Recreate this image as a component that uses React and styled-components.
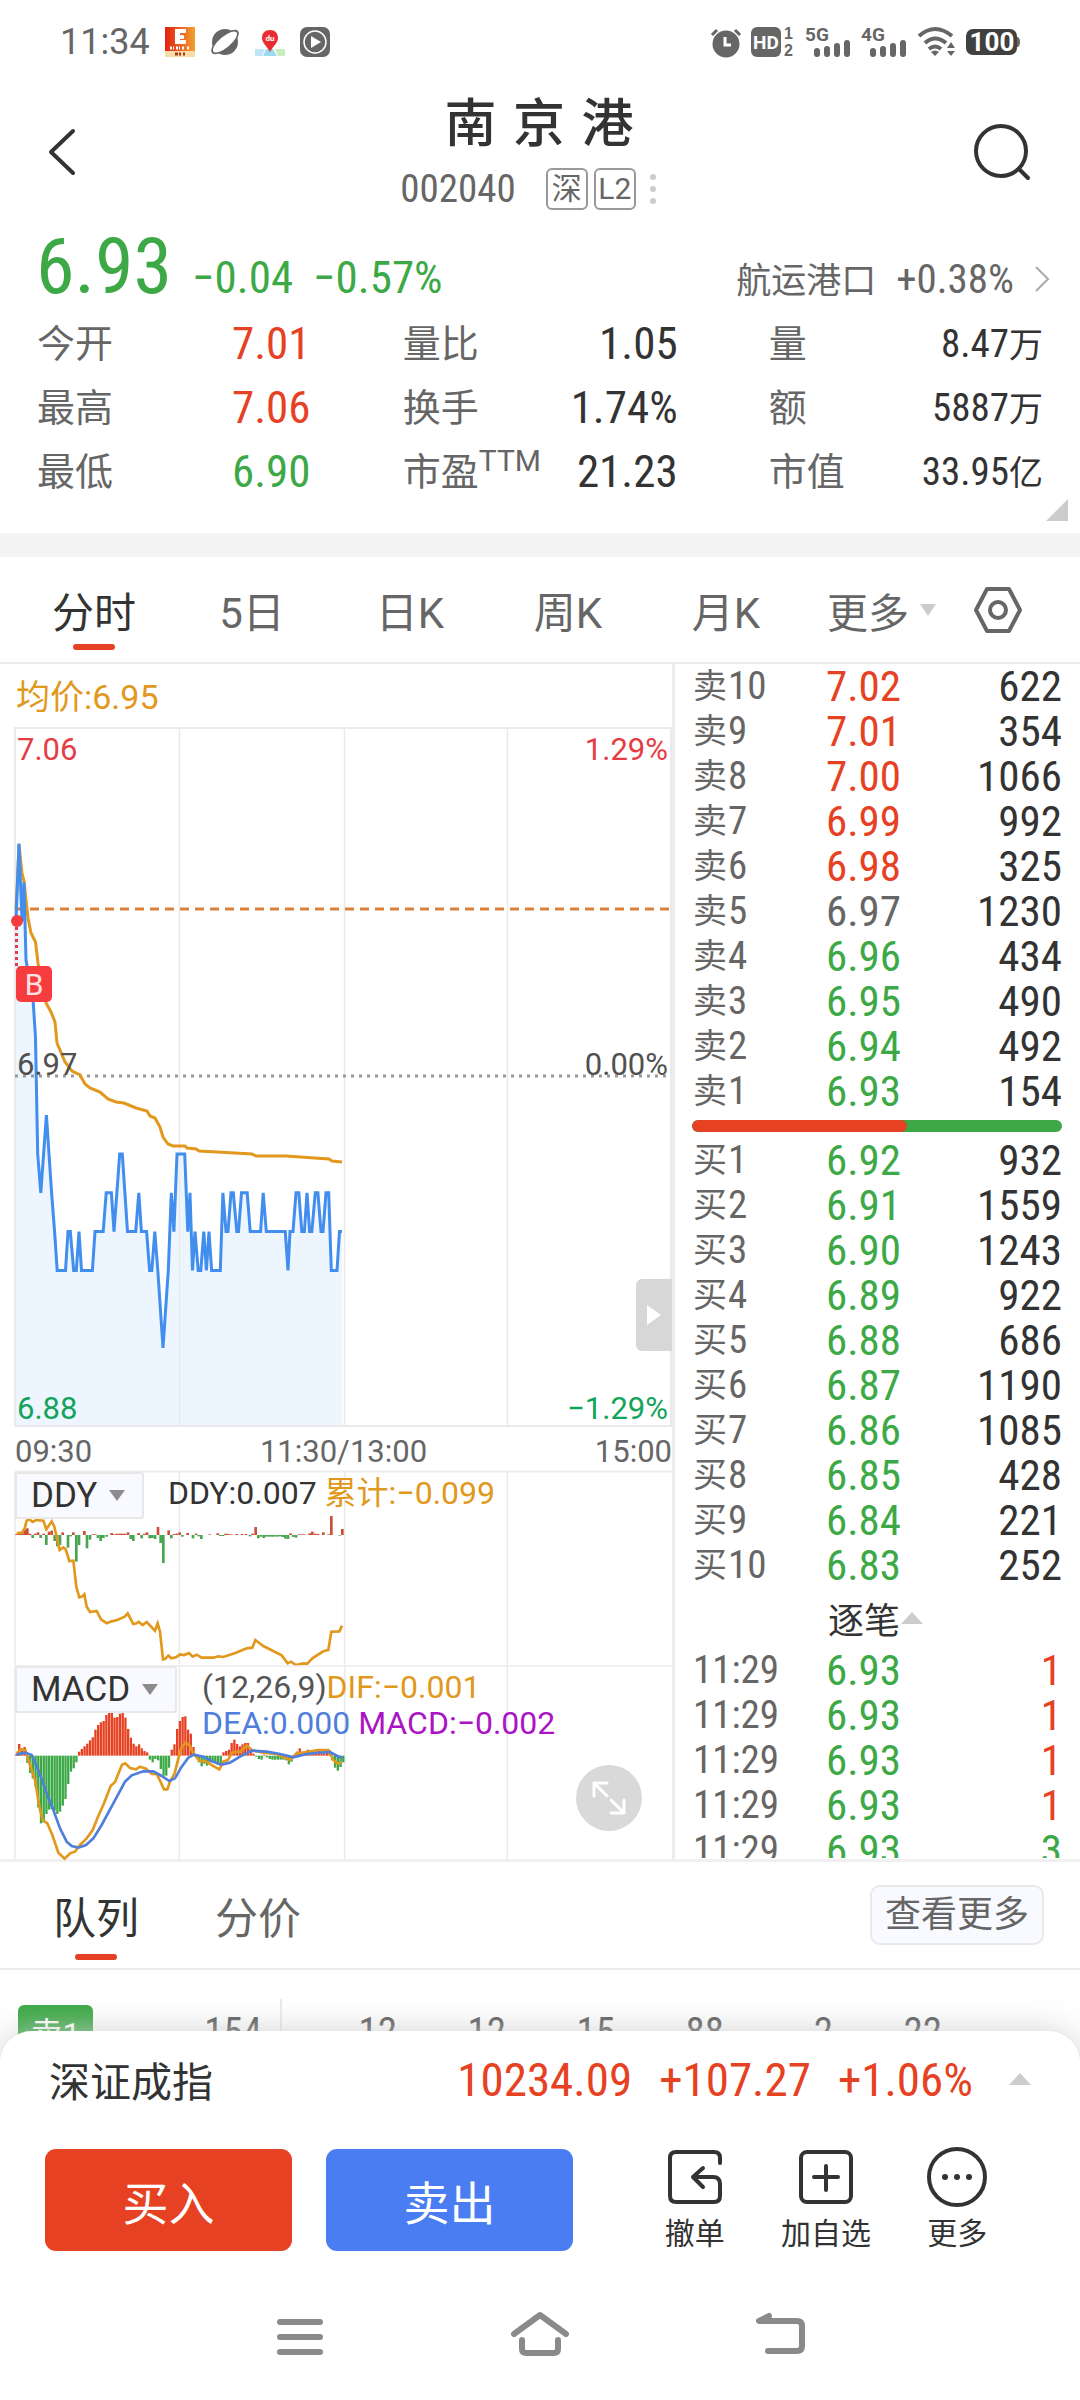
import styled, { createGlobalStyle } from "styled-components";

const RED = "#e64123";
const GREEN = "#3ca946";
const GOLD = "#e1981c";
const DARK = "#333333";
const GRAY = "#666666";
const LINE = "#ebebeb";

const GlobalStyle = createGlobalStyle`
  * {
    box-sizing: border-box;
  }

  body {
    margin: 0;
    background: #ffffff;
    color: ${DARK};
    font-family: Roboto, "Noto Sans CJK SC", sans-serif;
  }

  button,
  select {
    margin: 0;
    padding: 0;
    border: 0;
    background: none;
    color: inherit;
    font: inherit;
  }

  svg {
    display: block;
    flex: none;
    overflow: visible;
  }
`;

const Page = styled.main`
  display: flex;
  flex-direction: column;
  min-height: 100vh;
  overflow: hidden;
`;

const Num = styled.span`
  display: block;
  color: ${(props) => props.$color || "inherit"};
  font-family: "Roboto Condensed", Roboto, "Noto Sans CJK SC", sans-serif;
  font-size: ${(props) => props.$size || 43}px;
  white-space: nowrap;
`;

/* status bar */

const StatusBar = styled.div`
  display: flex;
  align-items: center;
  justify-content: space-between;
  height: 84px;
  padding: 0 60px;
  color: ${GRAY};
`;

const StatusGroup = styled.div`
  display: flex;
  align-items: center;
  gap: ${(props) => props.$gap}px;
`;

const Clock = styled.span`
  font-size: 36px;
`;

/* header */

const Header = styled.header`
  display: grid;
  grid-template-columns: 58px 1fr 58px;
  align-items: center;
  padding: 10px 49px 23px 47px;
`;

const IconButton = styled.button`
  display: flex;
  cursor: pointer;
`;

const Heading = styled.div`
  display: flex;
  flex-direction: column;
  align-items: center;
  gap: 14px;
`;

const StockName = styled.h1`
  margin: 0;
  font-family: "DejaVu Sans", "Noto Sans CJK SC", sans-serif;
  font-size: 52px;
  font-weight: 500;
  line-height: 60px;
`;

const SubLine = styled.div`
  display: flex;
  align-items: center;
  gap: 6px;
  height: 42px;
  padding-right: 16px;
  color: ${GRAY};
`;

const Code = styled(Num)`
  margin-right: 24px;
`;

const Tag = styled.span`
  width: 42px;
  height: 42px;
  border: 2px solid #999999;
  border-radius: 6px;
  font-size: 30px;
  line-height: 38px;
  text-align: center;
`;

const PriceRow = styled.div`
  display: flex;
  align-items: baseline;
  justify-content: space-between;
  height: 71px;
  padding: 0 30px 0 36px;
  line-height: 68px;
`;

const PriceGroup = styled.div`
  display: flex;
  align-items: baseline;
  gap: 20px;
`;

const Sector = styled.a`
  display: flex;
  align-items: baseline;
  gap: 20px;
  color: ${GRAY};
  font-size: 35px;
  text-decoration: none;
`;

const Quotes = styled.section`
  display: grid;
  grid-template-columns: 4fr 4fr 3fr;
  position: relative;
  padding: 8px 37px 29px;
`;

const QuoteColumn = styled.dl`
  margin: 0;
  padding-right: ${(props) => props.$pad || 0}px;
`;

const QuoteRow = styled.div`
  display: flex;
  align-items: center;
  justify-content: ${(props) => (props.$start ? "flex-start" : "space-between")};
  height: 64px;
`;

const QuoteLabel = styled.dt`
  min-width: ${(props) => (props.$start ? 195 : 0)}px;
  color: ${GRAY};
  font-size: 38px;
  line-height: 64px;
  white-space: nowrap;

  sup {
    font-size: 30px;
    line-height: 1;
  }
`;

const QuoteValue = styled.dd`
  margin: 0;
  line-height: 64px;
`;

const Unit = styled.span`
  font-size: 34px;
`;

const Corner = styled.span`
  position: absolute;
  right: 12px;
  bottom: 12px;
  border-bottom: 22px solid #cccccc;
  border-left: 22px solid transparent;
`;

const Band = styled.div`
  height: 24px;
  background: #f4f4f4;
`;

/* tabs */

const Tabs = styled.nav`
  display: flex;
  align-items: center;
  height: 107px;
  padding-left: 15px;
  border-bottom: 2px solid ${LINE};
`;

const Tab = styled.button`
  position: relative;
  width: ${(props) => props.$width || 158}px;
  height: 105px;
  color: ${(props) => (props.$active ? DARK : GRAY)};
  font-size: ${(props) => props.$size || 42}px;
  cursor: pointer;

  &::after {
    content: "";
    display: ${(props) => (props.$active ? "block" : "none")};
    position: absolute;
    bottom: ${(props) => props.$drop || 12}px;
    left: 50%;
    width: 42px;
    height: 6px;
    margin-left: -21px;
    border-radius: 3px;
    background: ${RED};
  }
`;

const MoreTab = styled.button`
  display: flex;
  align-items: center;
  gap: 11px;
  margin: 0 38px 0 22px;
  color: ${GRAY};
  font-size: 41px;
`;

const Triangle = styled.span`
  border-right: ${(props) => props.$w}px solid transparent;
  border-left: ${(props) => props.$w}px solid transparent;
  border-${(props) => (props.$up ? "bottom" : "top")}: ${(props) => props.$h}px solid
    ${(props) => props.$color || "#cccccc"};
`;

/* charts */

const Board = styled.section`
  display: grid;
  grid-template-columns: minmax(0, 1fr) 408px;
  border-bottom: 3px solid #f0f0f0;
`;

const Charts = styled.div`
  padding-left: 14px;
`;

const Average = styled.div`
  height: 63px;
  padding-left: 2px;
  color: ${GOLD};
  font-size: 34px;
  line-height: 66px;
`;

const Plot = styled.div`
  position: relative;
  height: ${(props) => props.$height}px;

  > svg {
    width: 100%;
    height: 100%;
  }
`;

const Scale = styled.div`
  display: flex;
  justify-content: space-between;
  position: absolute;
  top: ${(props) => props.$top}px;
  right: 4px;
  left: 3px;
  color: ${(props) => props.$color};
  font-size: 31px;
  line-height: 36px;
`;

const BuyMark = styled.span`
  position: absolute;
  top: 239px;
  left: 2px;
  width: 36px;
  height: 36px;
  border-radius: 5px;
  background: #f73c3f;
  color: #ffe1e1;
  font-size: 30px;
  line-height: 38px;
  text-align: center;
`;

const Handle = styled.button`
  display: flex;
  align-items: center;
  justify-content: center;
  position: absolute;
  right: 0;
  bottom: 76px;
  width: 36px;
  height: 72px;
  border-radius: 6px 0 0 6px;
  background: #d7d7d7;
`;

const Times = styled.div`
  display: flex;
  justify-content: space-between;
  height: 44px;
  padding-left: 1px;
  color: ${GRAY};
  font-size: 31px;
  line-height: 50px;
`;

const Picker = styled.label`
  display: flex;
  align-items: center;
  gap: 11px;
  position: absolute;
  top: 1px;
  left: 1px;
  height: 47px;
  padding: 0 17px 0 14px;
  border: 2px solid #e8e8e8;
  border-radius: 3px;
  background: #f8faff;
  font-size: 35px;

  select {
    appearance: none;
    outline: none;
  }
`;

const Legend = styled.div`
  position: absolute;
  top: 4px;
  left: ${(props) => props.$left}px;
  color: ${DARK};
  font-size: 32px;
  line-height: 36px;
  white-space: nowrap;
`;

const Tint = styled.span`
  color: ${(props) => props.$color};
`;

const Expand = styled.button`
  display: flex;
  align-items: center;
  justify-content: center;
  position: absolute;
  right: 30px;
  bottom: 28px;
  width: 66px;
  height: 66px;
  border-radius: 50%;
  background: #d9d9d9;
`;

/* order book */

const Book = styled.div`
  padding: 0 18px 0 17px;
  border-left: 3px solid ${LINE};
`;

const BookTable = styled.table`
  width: 100%;
  border-collapse: collapse;
  table-layout: fixed;

  td,
  th {
    height: 45px;
    padding: 0;
    font-weight: 400;
    line-height: 45px;
    text-align: left;
  }

  th {
    padding-left: 1px;
    color: ${GRAY};
  }

  td:last-child {
    text-align: right;
  }
`;

const BookLabel = styled.span`
  display: flex;
  align-items: center;
  gap: 1px;
  height: 45px;
  font-size: 34px;
`;

const Ratio = styled.div`
  height: 12px;
  margin: 6px 0;
  border-radius: 6px;
  background: ${GREEN};
  overflow: hidden;
`;

const RatioFill = styled.div`
  height: 12px;
  border-radius: 6px;
  background: ${RED};
`;

const TradesToggle = styled.button`
  display: flex;
  align-items: center;
  gap: 1px;
  height: 60px;
  margin-left: 136px;
  font-size: 36px;
`;

const Trades = styled.div`
  height: 210px;
  overflow: hidden;
`;

/* queue */

const QueueTabs = styled(Tabs)`
  height: 108px;
  padding: 0 36px 0 15px;
`;

const SeeMore = styled.button`
  height: 60px;
  margin-left: auto;
  padding: 0 13px;
  border: 2px solid #e9e9e9;
  border-radius: 10px;
  background: #f8faff;
  color: ${GRAY};
  font-size: 36px;
  line-height: 54px;
`;

const Queue = styled.div`
  display: grid;
  grid-template-columns: 75px 169px 20px 115px repeat(5, 109px);
  height: 91px;
  padding: 29px 0 0 18px;
  color: #555555;
  line-height: 66px;
  text-align: right;
`;

const QueueBadge = styled.span`
  height: 60px;
  margin-top: 6px;
  border-radius: 6px;
  background: ${GREEN};
  color: #ffffff;
  font-size: 32px;
  line-height: 58px;
  text-align: center;
`;

const QueueRule = styled.span`
  border-right: 2px solid ${LINE};
`;

/* bottom sheet */

const Sheet = styled.section`
  position: relative;
  flex: 1;
  margin-top: -30px;
  padding: 0 45px;
  border-radius: 32px 32px 0 0;
  background: #ffffff;
  box-shadow: 0 0 32px rgba(205, 205, 205, 0.9);
`;

const IndexRow = styled.div`
  display: flex;
  align-items: center;
  justify-content: space-between;
  height: 96px;
  padding: 0 4px;
  font-size: 41px;
`;

const IndexFigures = styled.div`
  display: flex;
  gap: 27px;
  margin: 0 36px 0 auto;
`;

const Actions = styled.div`
  display: flex;
  align-items: center;
  gap: 34px;
  margin-top: 20px;
`;

const TradeButton = styled.button`
  width: 247px;
  height: 102px;
  border-radius: 11px;
  background: ${(props) => props.$color};
  color: #ffffff;
  font-size: 46px;
  cursor: pointer;
`;

const Tools = styled.div`
  display: flex;
  flex: 1;
  margin: 0 12px 0 22px;
`;

const Tool = styled.button`
  display: flex;
  flex: 1;
  flex-direction: column;
  align-items: center;
  gap: 9px;
  font-size: 30px;
  line-height: 36px;
`;

const SystemNav = styled.nav`
  display: flex;
  justify-content: center;
  gap: 180px;
  padding: 54px 0 36px;
`;

const asks = [
  ["10", "7.02", "622", RED],
  ["9", "7.01", "354", RED],
  ["8", "7.00", "1066", RED],
  ["7", "6.99", "992", RED],
  ["6", "6.98", "325", RED],
  ["5", "6.97", "1230", GRAY],
  ["4", "6.96", "434", GREEN],
  ["3", "6.95", "490", GREEN],
  ["2", "6.94", "492", GREEN],
  ["1", "6.93", "154", GREEN],
];

const bids = [
  ["1", "6.92", "932", GREEN],
  ["2", "6.91", "1559", GREEN],
  ["3", "6.90", "1243", GREEN],
  ["4", "6.89", "922", GREEN],
  ["5", "6.88", "686", GREEN],
  ["6", "6.87", "1190", GREEN],
  ["7", "6.86", "1085", GREEN],
  ["8", "6.85", "428", GREEN],
  ["9", "6.84", "221", GREEN],
  ["10", "6.83", "252", GREEN],
];

const trades = [
  ["11:29", "6.93", "1", RED],
  ["11:29", "6.93", "1", RED],
  ["11:29", "6.93", "1", RED],
  ["11:29", "6.93", "1", RED],
  ["11:29", "6.93", "3", GREEN],
];

const queue = ["12", "12", "15", "88", "2", "22"];

// [x, cents above 6.90]
const price = [
  [16, 11], [19, 13], [22, 11], [24, 12], [26, 10], [33, 9], [35.5, 8], [37.7, 5],
  [40.8, 4], [46.4, 6], [49, 5], [51.6, 4], [54.6, 3], [57.2, 2], [65.5, 2], [68, 3],
  [70.3, 3], [73.7, 2], [76.3, 2], [79, 3], [81.5, 2], [92.4, 2], [95, 3], [103.2, 3],
  [106.2, 4], [111.4, 4], [114, 3], [119.7, 5], [122.3, 5], [127.5, 3], [135.7, 3],
  [138.8, 4], [141.4, 3], [146.6, 3], [149.6, 2], [151.8, 2], [154.8, 3], [157.8, 2],
  [163, 0], [168.3, 2], [171.3, 4], [173.9, 3], [177, 5], [184.7, 5], [187.8, 3],
  [190, 4], [192.5, 2], [195, 3], [198.2, 2], [200.8, 2], [203.8, 3], [206.4, 2],
  [209, 3], [211.6, 2], [220.3, 2], [222.9, 4], [226, 3], [228, 3], [231, 4],
  [233.3, 4], [236.8, 3], [238.5, 3], [241.5, 4], [247.2, 4], [250.2, 3], [260.6, 3],
  [263.2, 4], [266.3, 3], [285.3, 3], [288, 2], [290, 3], [293, 3], [296, 4],
  [298.8, 4], [301.8, 3], [304.4, 3], [307, 4], [309.6, 3], [311.8, 3], [315.3, 4],
  [317.9, 4], [321, 3], [323, 3], [326, 4], [328.7, 4], [331.3, 2], [337, 2],
  [339.5, 3], [342, 3],
];

const pricePoints = price.map(([x, c]) => `${x},${1348 - c * 38.8}`).join(" ");

const averagePoints =
  "16,910 19,845 22,873 24,881 26,900 28,918 31,933 35.5,942 38,963 42,990 46,1003 51,1012 55,1022 57,1043 65,1062 72,1071 80,1075 85,1084 90,1088 100,1092 108,1099 116,1102 124,1103 136,1108 147,1111 150,1116 155,1118 160,1127 163,1137 168,1144 173,1146 185,1146 187,1148 196,1149 199,1151 217,1152 252,1154 256,1156 286,1156 329,1159 332,1161 342,1162";

// [x, height], up is inflow
const ddyBars = [
  [46, 3], [54, 4], [62, 8], [70, 16], [78, 20], [86, 4], [94, -9], [102, 4], [110, 8],
  [118, -9], [127, 4], [135, -30], [143, 10], [151, 13], [160, -18], [168, -34],
  [176, -30], [184, 8], [200, -38], [208, -4], [216, 8], [225, -80], [233, -30],
  [249, 12], [257, -40], [266, -14], [274, 2], [282, 2], [290, -9], [298, -18],
  [306, -9], [316, -5], [331, 6], [339, 2], [347, 4], [355, 4], [363, 4], [371, 4],
  [380, 8], [388, -12], [396, -18], [412, 6], [421, -10], [429, 4], [437, 8],
  [445, -10], [453, -9], [461, -12], [470, 24], [478, -24], [486, -84], [502, 14],
  [510, -10], [518, 3], [526, 4], [535, 8], [543, -5], [559, 6], [575, -10],
  [584, 4], [592, -4], [600, -12], [625, 2], [649, 5], [657, -3], [665, -3],
  [673, 4], [681, 3], [690, 2], [706, 3], [722, 3], [734, 3], [746, -4], [754, 4],
  [763, 24], [771, -10], [779, -5], [787, -9], [795, -5], [803, -5], [811, -5],
  [819, -5], [828, -5], [836, -4], [844, -6], [852, -11], [860, -12], [868, 5],
  [876, -6], [884, -8], [893, 2], [901, 2], [909, 2], [925, 5], [933, 10], [942, 4],
  [950, 3], [966, 8], [982, 2], [990, 57], [1015, -2], [1023, 18],
];

const ddyLine =
  "50,220 66,218 74,205 80,182 88,178 98,186 108,180 130,182 139,208 155,184 163,200 172,240 179,270 190,262 197,268 208,303 220,302 229,380 238,412 246,410 253,403 260,440 270,456 290,453 303,478 320,490 335,484 352,480 374,470 383,460 391,475 400,492 410,490 416,486 428,495 440,486 465,512 473,490 480,515 489,598 495,597 505,587 514,595 528,592 540,583 552,585 567,579 578,590 590,584 605,593 640,593 655,589 670,591 706,579 740,565 757,563 766,540 790,558 845,586 863,610 873,605 888,615 910,610 922,611 938,594 970,574 985,570 994,515 1018,514 1026,497";

const macdBars = [
  5, 35, 22, 26, -22, -52, -68, -92, -155, -203, -200, -175, -162, -160, -165, -175,
  -168, -150, -130, -85, -48, -38, -20, 12, 20, 28, 36, 46, 55, 78, 92, 100, 104, 122,
  134, 134, 114, 116, 126, 134, 114, 80, 54, 36, 28, 34, 22, 14, 10, -12, -20, -10,
  -14, -40, -60, -60, -36, 18, 34, 80, 104, 116, 118, 78, 66, 26, 0, -20, -32, -24,
  -30, -20, -20, -20, -28, -30, 10, 14, 18, 38, 48, 35, 28, 34, 38, 38, 12, 6, -3,
  -10, -12, 3, -5, -10, -12, -12, -12, -12, -12, -14, -26, -18, -5, 12, 22, 12, 10,
  18, 10, 6, 12, 16, 8, 6, 14, 16, -14, -36, -45, -34, -20,
];

const difLine =
  "50,880 62,868 76,870 90,915 105,960 118,1040 128,1080 142,1090 157,1125 175,1178 194,1196 210,1180 225,1175 240,1155 260,1135 278,1110 292,1075 312,1030 332,978 345,966 366,914 376,910 390,924 408,928 420,920 438,926 456,942 470,942 480,962 492,988 502,988 510,965 524,940 535,895 545,862 556,848 568,855 580,880 598,902 620,905 640,918 658,928 670,905 684,900 694,880 706,875 720,876 740,856 755,870 790,878 830,882 870,900 890,880 910,878 955,870 985,870 1000,900 1012,910 1024,908";

const deaLine =
  "50,884 75,878 95,885 115,930 140,1000 160,1050 180,1105 200,1145 215,1158 235,1163 258,1155 280,1135 305,1095 340,1030 375,965 395,946 430,934 460,934 485,948 508,963 525,955 545,920 565,893 582,884 610,890 640,905 665,914 690,908 720,890 755,872 800,875 840,882 880,892 920,882 960,878 990,876 1012,888 1028,893";

const StatusIcons = () => (
  <StatusGroup $gap={15}>
    <Clock>11:34</Clock>
    <svg width="30" height="30" viewBox="0 0 30 30">
      <defs>
        <linearGradient id="sunset">
          <stop offset="0" stopColor="#e21f10" />
          <stop offset="1" stopColor="#f3a032" />
        </linearGradient>
      </defs>
      <rect width="30" height="30" fill="url(#sunset)" />
      <rect y="24" width="30" height="6" fill="#f8dca8" />
      <rect x="10" y="2" width="5" height="15" fill="#fff" />
      <rect x="10" y="2" width="11" height="4" rx="1" fill="#fff" />
      <rect x="10" y="8" width="9" height="4" rx="1" fill="#fff" />
      <rect x="10" y="13" width="11" height="4" rx="1" fill="#fff" />
      <path d="M5 21h4M11 21h4M17 21h3M22 21h3" stroke="#fff" strokeWidth="3" strokeDasharray="2 1" />
      <path d="M10 27h3M14 27h2M18 27h2" stroke="#a33b1f" strokeWidth="3" />
    </svg>
    <svg width="30" height="30" viewBox="0 0 30 30">
      <circle cx="15" cy="15" r="13" fill={GRAY} />
      <ellipse cx="15" cy="15" rx="17" ry="7" fill={GRAY} transform="rotate(-40 15 15)" />
      <ellipse cx="15" cy="15" rx="15" ry="5.5" fill="#fff" transform="rotate(-40 15 15)" />
    </svg>
    <svg width="30" height="30" viewBox="0 0 30 30">
      <path d="M0 22h10l-3 7H0z" fill="#bfe6f4" />
      <path d="M20 22h10v7h-7z" fill="#c8eebf" />
      <path d="M11 22l-3 7h14l-4-7z" fill="#9bdcf3" />
      <path d="M15 3c5 0 8 3 8 8 0 5-5 8-8 14-3-6-8-9-8-14 0-5 3-8 8-8z" fill="#e92c2f" />
      <text x="15" y="14" fill="#fff" fontSize="8" fontWeight="700" textAnchor="middle">
        du
      </text>
    </svg>
    <svg width="30" height="30" viewBox="0 0 30 30">
      <rect width="30" height="30" rx="7" fill={GRAY} />
      <circle cx="15" cy="15" r="11" fill="none" stroke="#fff" strokeWidth="1.5" />
      <path d="M11 9l10 6-10 6z" fill="#fff" />
    </svg>
  </StatusGroup>
);

const Signal = ({ name }) => (
  <svg width="46" height="30" viewBox="0 0 46 30">
    <text x="0" y="14" fill={GRAY} fontSize="19" fontWeight="700" fontFamily="Roboto">
      {name}
    </text>
    <path
      d="M12 24v3M22 22v5M32 19v8M42 16v11"
      stroke={GRAY}
      strokeWidth="6"
      strokeLinecap="round"
    />
  </svg>
);

const StatusSignals = () => (
  <StatusGroup $gap={10}>
    <svg width="30" height="30" viewBox="0 0 30 30">
      <circle cx="15" cy="17" r="13.5" fill={GRAY} />
      <path d="M1 8l5-5M29 8l-5-5" stroke={GRAY} strokeWidth="3" />
      <path d="M14 10v8h6" fill="none" stroke="#fff" strokeWidth="3" />
    </svg>
    <svg width="44" height="30" viewBox="0 0 44 30">
      <rect width="30" height="30" rx="6" fill={GRAY} />
      <text x="15" y="22" fill="#fff" fontSize="19" fontWeight="700" fontFamily="Roboto" textAnchor="middle">
        HD
      </text>
      <g fill={GRAY} fontSize="16" fontWeight="700" fontFamily="Liberation Sans">
        <text x="33" y="12">1</text>
        <text x="33" y="29">2</text>
      </g>
    </svg>
    <Signal name="5G" />
    <Signal name="4G" />
    <svg width="38" height="30" viewBox="0 0 38 30">
      <g fill="none" stroke={GRAY} strokeWidth="4">
        <path d="M2 9q16-14 33 0" />
        <path d="M8 16q10-9 21 0" />
        <path d="M12 22q6-5 12 0" />
      </g>
      <path d="M14 25q4-3 8 0l-4 4z" fill={GRAY} />
      <path d="M34 15l4 6h-8zM34 29l4-5h-8z" fill={GRAY} />
    </svg>
    <svg width="55" height="28" viewBox="0 0 55 28">
      <rect x="1" y="1" width="51" height="26" rx="7" fill="#404040" />
      <path d="M52 9q3 0 3 5t-3 5z" fill={GRAY} />
      <text x="27" y="23" fill="#fff" fontSize="26" fontWeight="700" fontFamily="Roboto" textAnchor="middle">
        100
      </text>
    </svg>
  </StatusGroup>
);

const MainChart = () => (
  <Plot $height={700}>
    <svg viewBox="14 727 658 700" preserveAspectRatio="none">
      <polygon points={`${pricePoints} 342,1426 16,1426`} fill="#edf5fe" />
      <g stroke="#eaeaec" strokeWidth="1.500" fill="none">
        <path d="M179.500 727V1426M344.500 727V1426M507.500 727V1426" />
        <path d="M15 1426V728H671V1426z" strokeWidth="2" />
      </g>
      <path d="M15 909H671" stroke="#d9813c" strokeWidth="3" strokeDasharray="9 6" />
      <path d="M15 1076H671" stroke="#999999" strokeWidth="3" strokeDasharray="3 5" />
      <polyline points={averagePoints} fill="none" stroke={GOLD} strokeWidth="3" />
      <polyline points={pricePoints} fill="none" stroke="#418eee" strokeWidth="3" />
      <path d="M16.500 927V966" stroke="#e23b4b" strokeWidth="3" strokeDasharray="3 3" />
      <circle cx="17" cy="921" r="6" fill="#f73c3f" />
    </svg>
    <Scale $top={5} $color="#e63c46">
      <span>7.06</span>
      <span>1.29%</span>
    </Scale>
    <Scale $top={320} $color="#505050">
      <span>6.97</span>
      <span>0.00%</span>
    </Scale>
    <Scale $top={664} $color="#12a35c">
      <span>6.88</span>
      <span>−1.29%</span>
    </Scale>
    <BuyMark>B</BuyMark>
    <Handle aria-label="收起盘口">
      <svg width="16" height="22" viewBox="0 0 16 22">
        <path d="M1 1l14 10L1 21z" fill="#fff" />
      </svg>
    </Handle>
  </Plot>
);

const DdyChart = () => (
  <Plot $height={194}>
    <svg viewBox="42 33 1974 582" preserveAspectRatio="none">
      <g stroke="#ebebed" strokeWidth="5">
        <path d="M45 35H2016M45 35V615M538 35V615M1034 35V615M1522 35V615" fill="none" />
      </g>
      {ddyBars.map(([x, h]) => (
        <rect
          key={x}
          x={x}
          y={h > 0 ? 225 - h : 225}
          width="8"
          height={Math.abs(h)}
          fill={h > 0 ? "#cb4f38" : "#48a651"}
        />
      ))}
      <polyline points={ddyLine} fill="none" stroke={GOLD} strokeWidth="8" />
    </svg>
    <Picker>
      <select aria-label="指标一">
        <option>DDY</option>
      </select>
      <Triangle $w={8} $h={11} $color="#8c8c8c" />
    </Picker>
    <Legend $left={154}>
      DDY:0.007 <Tint $color={GOLD}>累计:−0.099</Tint>
    </Legend>
  </Plot>
);

const MacdChart = () => (
  <Plot $height={194}>
    <svg viewBox="42 615 1974 582" preserveAspectRatio="none">
      <g stroke="#ebebed" strokeWidth="5">
        <path d="M45 618H2016M45 618V1197M538 618V1197M1034 618V1197M1522 618V1197" fill="none" />
      </g>
      {macdBars.map((h, i) => (
        <rect
          key={i}
          x={46 + i * 8.17}
          y={h > 0 ? 887 - h : 887}
          width="7"
          height={Math.abs(h)}
          fill={h > 0 ? RED : GREEN}
        />
      ))}
      <polyline points={difLine} fill="none" stroke={GOLD} strokeWidth="8" />
      <polyline points={deaLine} fill="none" stroke="#4f7edb" strokeWidth="8" />
    </svg>
    <Picker>
      <select aria-label="指标二">
        <option>MACD</option>
      </select>
      <Triangle $w={8} $h={11} $color="#8c8c8c" />
    </Picker>
    <Legend $left={188}>
      <Tint $color="#555555">(12,26,9)</Tint>
      <Tint $color={GOLD}>DIF:−0.001</Tint>
      <br />
      <Tint $color="#4f7edb">DEA:0.000</Tint> <Tint $color="#aa14c3">MACD:−0.002</Tint>
    </Legend>
    <Expand aria-label="全屏">
      <svg width="34" height="34" viewBox="0 0 34 34">
        <path
          d="M15 2H2v13M2 2l13 13M32 19v13H19M32 32L19 19"
          fill="none"
          stroke="#fff"
          strokeWidth="3"
          strokeLinecap="round"
          strokeLinejoin="round"
        />
      </svg>
    </Expand>
  </Plot>
);

const Levels = ({ side, rows }) => (
  <BookTable>
    <colgroup>
      <col width="134" />
      <col />
      <col />
    </colgroup>
    <tbody>
      {rows.map(([level, value, amount, color]) => (
        <tr key={level}>
          <th scope="row">
            <BookLabel>
              {side}
              <Num $size={39}>{level}</Num>
            </BookLabel>
          </th>
          <td>
            <Num $color={color}>{value}</Num>
          </td>
          <td>
            <Num>{amount}</Num>
          </td>
        </tr>
      ))}
    </tbody>
  </BookTable>
);

const TradeList = () => (
  <BookTable>
    <colgroup>
      <col width="134" />
      <col />
      <col />
    </colgroup>
    <tbody>
      {trades.map(([time, value, amount, color], index) => (
        <tr key={index}>
          <th scope="row">
            <Num $size={39}>{time}</Num>
          </th>
          <td>
            <Num $color={GREEN}>{value}</Num>
          </td>
          <td>
            <Num $color={color}>{amount}</Num>
          </td>
        </tr>
      ))}
    </tbody>
  </BookTable>
);

const Quote = ({ label, sup, value, unit, color, start }) => (
  <QuoteRow $start={start}>
    <QuoteLabel $start={start}>
      {label}
      {sup && <sup>{sup}</sup>}
    </QuoteLabel>
    <QuoteValue>
      <Num $size={unit ? 39 : 45} $color={color}>
        {value}
        {unit && <Unit>{unit}</Unit>}
      </Num>
    </QuoteValue>
  </QuoteRow>
);

const toolStroke = {
  fill: "none",
  stroke: DARK,
  strokeWidth: 4,
  strokeLinecap: "round",
  strokeLinejoin: "round",
};

const navStroke = { ...toolStroke, stroke: "#8a8a8a", strokeWidth: 6 };

const App = () => (
  <Page>
    <GlobalStyle />
    <StatusBar>
      <StatusIcons />
      <StatusSignals />
    </StatusBar>

    <Header>
      <IconButton aria-label="返回">
        <svg width="30" height="48" viewBox="0 0 30 48">
          <path d="M26 3L4 24l22 21" {...toolStroke} />
        </svg>
      </IconButton>
      <Heading>
        <StockName>南 京 港</StockName>
        <SubLine>
          <Code $size={39}>002040</Code>
          <Tag>深</Tag>
          <Tag>L2</Tag>
          <svg width="20" height="32" viewBox="0 0 20 32" fill="#cccccc">
            <circle cx="11" cy="4" r="3" />
            <circle cx="11" cy="16" r="3" />
            <circle cx="11" cy="28" r="3" />
          </svg>
        </SubLine>
      </Heading>
      <IconButton aria-label="搜索">
        <svg width="58" height="58" viewBox="0 0 58 58">
          <circle cx="28" cy="28" r="25" {...toolStroke} />
          <path d="M46 46l9 9" {...toolStroke} />
        </svg>
      </IconButton>
    </Header>

    <PriceRow>
      <PriceGroup>
        <Num $size={78} $color={GREEN}>6.93</Num>
        <Num $size={45} $color={GREEN}>−0.04</Num>
        <Num $size={45} $color={GREEN}>−0.57%</Num>
      </PriceGroup>
      <Sector href="#sector">
        航运港口
        <Num $size={41}>+0.38%</Num>
        <svg width="16" height="28" viewBox="0 0 16 28">
          <path d="M2 2l12 12L2 26" fill="none" stroke="#aaaaaa" strokeWidth="2" />
        </svg>
      </Sector>
    </PriceRow>

    <Quotes>
      <QuoteColumn>
        <Quote start label="今开" value="7.01" color={RED} />
        <Quote start label="最高" value="7.06" color={RED} />
        <Quote start label="最低" value="6.90" color={GREEN} />
      </QuoteColumn>
      <QuoteColumn $pad={91}>
        <Quote label="量比" value="1.05" />
        <Quote label="换手" value="1.74%" />
        <Quote label="市盈" sup="TTM" value="21.23" />
      </QuoteColumn>
      <QuoteColumn>
        <Quote label="量" value="8.47" unit="万" />
        <Quote label="额" value="5887" unit="万" />
        <Quote label="市值" value="33.95" unit="亿" />
      </QuoteColumn>
      <Corner />
    </Quotes>

    <Band />

    <Tabs>
      <Tab $active>分时</Tab>
      <Tab>5日</Tab>
      <Tab>日K</Tab>
      <Tab>周K</Tab>
      <Tab>月K</Tab>
      <MoreTab>
        更多
        <Triangle $w={8} $h={12} />
      </MoreTab>
      <IconButton aria-label="设置">
        <svg width="48" height="48" viewBox="0 0 48 48">
          <g fill="none" stroke={GRAY} strokeWidth="4" strokeLinejoin="round">
            <path d="M13 3h22l11 21-11 21H13L2 24z" />
            <circle cx="24" cy="24" r="8" />
          </g>
        </svg>
      </IconButton>
    </Tabs>

    <Board>
      <Charts>
        <Average>均价:6.95</Average>
        <MainChart />
        <Times>
          <span>09:30</span>
          <span>11:30/13:00</span>
          <span>15:00</span>
        </Times>
        <DdyChart />
        <MacdChart />
      </Charts>
      <Book>
        <Levels side="卖" rows={asks} />
        <Ratio>
          <RatioFill style={{ width: "58%" }} />
        </Ratio>
        <Levels side="买" rows={bids} />
        <TradesToggle>
          逐笔
          <Triangle $up $w={11} $h={12} />
        </TradesToggle>
        <Trades>
          <TradeList />
        </Trades>
      </Book>
    </Board>

    <QueueTabs>
      <Tab $active $width={162} $size={43} $drop={8}>队列</Tab>
      <Tab $width={162} $size={43}>分价</Tab>
      <SeeMore>查看更多</SeeMore>
    </QueueTabs>
    <Queue>
      <QueueBadge>卖1</QueueBadge>
      <Num $size={39}>154</Num>
      <QueueRule />
      {queue.map((lot, index) => (
        <Num key={index} $size={39}>{lot}</Num>
      ))}
    </Queue>

    <Sheet>
      <IndexRow>
        <span>深证成指</span>
        <IndexFigures>
          <Num $size={47} $color={RED}>10234.09</Num>
          <Num $size={47} $color={RED}>+107.27</Num>
          <Num $size={47} $color={RED}>+1.06%</Num>
        </IndexFigures>
        <Triangle $up $w={11} $h={12} />
      </IndexRow>
      <Actions>
        <TradeButton $color={RED}>买入</TradeButton>
        <TradeButton $color="#4a7df2">卖出</TradeButton>
        <Tools>
          <Tool>
            <svg width="60" height="60" viewBox="0 0 60 60">
              <path
                d="M55 16v-5q0-6-6-6H11q-6 0-6 6v38q0 6 6 6h38q6 0 6-6V37q0-7-7-7H28M38 21l-10 9 10 10"
                {...toolStroke}
              />
            </svg>
            撤单
          </Tool>
          <Tool>
            <svg width="60" height="60" viewBox="0 0 60 60">
              <rect x="5" y="5" width="50" height="50" rx="6" {...toolStroke} />
              <path d="M30 19v24M18 30h24" {...toolStroke} />
            </svg>
            加自选
          </Tool>
          <Tool>
            <svg width="60" height="60" viewBox="0 0 60 60">
              <circle cx="30" cy="30" r="28" {...toolStroke} />
              <g fill={DARK}>
                <circle cx="18" cy="30" r="3" />
                <circle cx="30" cy="30" r="3" />
                <circle cx="42" cy="30" r="3" />
              </g>
            </svg>
            更多
          </Tool>
        </Tools>
      </Actions>
      <SystemNav>
        <IconButton aria-label="最近任务">
          <svg width="60" height="54" viewBox="0 0 60 54">
            <path d="M10 16h40M10 31h40M10 46h40" {...navStroke} />
          </svg>
        </IconButton>
        <IconButton aria-label="主页">
          <svg width="60" height="54" viewBox="0 0 60 54">
            <path d="M4 28L30 9l26 19M12 34v9q0 4 4 4h28q4 0 4-4v-9" {...navStroke} />
          </svg>
        </IconButton>
        <IconButton aria-label="后退">
          <svg width="60" height="54" viewBox="0 0 60 54">
            <path d="M19 10L9 15h38q5 0 5 5v20q0 5-5 5H18" {...navStroke} />
          </svg>
        </IconButton>
      </SystemNav>
    </Sheet>
  </Page>
);

export default App;
